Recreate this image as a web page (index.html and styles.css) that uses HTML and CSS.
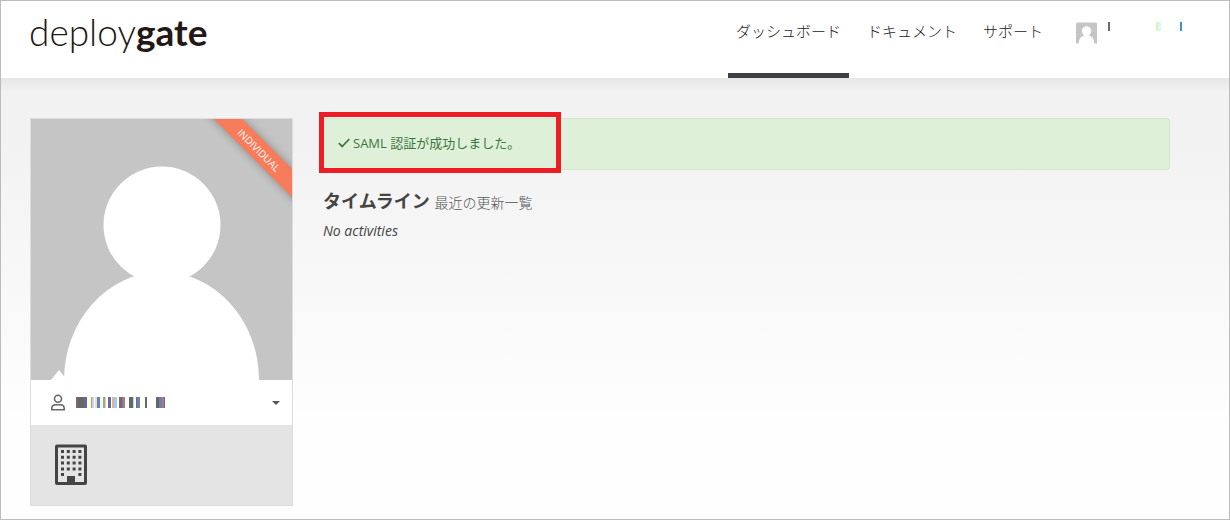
FILE: index.html
```html
<!DOCTYPE html>
<html lang="ja">
<head>
<meta charset="utf-8">
<meta name="viewport" content="width=device-width, initial-scale=1">
<title>DeployGate</title>
<link rel="stylesheet" href="styles.css">
</head>
<body>
<svg class="defs" aria-hidden="true">
  <symbol id="avatar" viewBox="0 0 261 261">
    <rect width="261" height="261" fill="#c5c5c5"/>
    <circle cx="131" cy="106" r="58.5" fill="#fff"/>
    <ellipse cx="130.500" cy="261" rx="97.500" ry="108" fill="#fff"/>
  </symbol>
</svg>
<div class="page">
  <header class="header">
    <a class="logo" href="#">deploy<b>gate</b></a>
    <nav class="nav">
      <a class="nav-link active" href="#">ダッシュボード</a>
      <a class="nav-link" href="#">ドキュメント</a>
      <a class="nav-link" href="#">サポート</a>
      <button class="account" type="button" aria-label="アカウント">
        <svg class="account-avatar"><use href="#avatar"/></svg>
        <svg class="account-name" viewBox="0 0 74 9" shape-rendering="crispEdges">
          <path fill="#6b6b6b" d="M0 0h2v9H0z"/>
          <path fill="#ffe3ae" d="M48 0h2v9h-2z"/>
          <path fill="#cff" d="M50 0h3v9h-3z"/>
          <path fill="#3a93d5" d="M72 0h2v9h-2z"/>
        </svg>
      </button>
    </nav>
  </header>
  <div class="content">
    <aside class="card">
      <div class="photo">
        <svg class="photo-image"><use href="#avatar"/></svg>
        <span class="ribbon">INDIVIDUAL</span>
      </div>
      <button class="user" type="button" aria-label="ユーザー">
        <svg class="user-icon" viewBox="0 0 14 17" fill="none" stroke="#666" stroke-width="1.6">
          <circle cx="7" cy="4.7" r="3.5"/>
          <path d="M.8 15.8v-1.3c0-2.4 1.6-3.8 3.7-3.8h5c2.100 0 3.700 1.400 3.700 3.800v1.300z"/>
        </svg>
        <svg class="user-name" viewBox="0 0 89 11" shape-rendering="crispEdges">
          <path fill="#666" d="M2 0h6v11H2zM53 0h4v11h-4zM70 0h1v11h-1zM80 0h3v11h-3z"/>
          <path fill="#806666" d="M0 0h2v11H0zM43 0h3v11h-3zM60 0h1v11h-1z"/>
          <path fill="#66669b" d="M8 0h3v11H8zM32 0h3v11h-3zM69 0h1v11h-1zM88 0h1v11h-1z"/>
          <path fill="#ffffe0" d="M11 0h4v11h-4zM30 0h2v11h-2zM66 0h3v11h-3z"/>
          <path fill="#d0966a" d="M15 0h1v11h-1zM27 0h2v11h-2z"/>
          <path fill="#f0b080" d="M36 0h2v11h-2z"/>
          <path fill="#a8dcff" d="M16 0h2v11h-2zM29 0h1v11h-1zM57 0h1v11h-1z"/>
          <path fill="#ffd9ae" d="M19 0h2v11h-2z"/>
          <path fill="#6680bb" d="M21 0h3v11h-3zM46 0h1v11h-1zM61 0h3v11h-3zM83 0h3v11h-3z"/>
          <path fill="#e0ffff" d="M24 0h3v11h-3z"/>
          <path fill="#99ccff" d="M38 0h3v11h-3z"/>
          <path fill="#b87a66" d="M47 0h2v11h-2zM86 0h2v11h-2z"/>
        </svg>
        <span class="caret"></span>
      </button>
      <div class="organizations">
        <a class="organization" href="#" aria-label="組織">
          <svg class="building" viewBox="0 0 32 41">
            <rect x="1.500" y="2" width="29" height="37.500" rx=".5" fill="none" stroke="#444" stroke-width="3"/>
            <path d="M12 32h8v8h-8z" fill="#444"/>
            <path d="M6 7.500h22M6 13.300h22M6 19.100h22M6 24.900h22" stroke="#444" stroke-width="3" stroke-dasharray="3 2.800"/>
            <path d="M6 30.500h3M23.400 30.500h3" stroke="#444" stroke-width="3"/>
          </svg>
        </a>
      </div>
    </aside>
    <main class="main">
      <div class="alert" role="status">
        <svg class="check" viewBox="0 0 12 10" fill="none" stroke="#3c763d" stroke-width="1.8"><path d="M.8 5.200l3.400 3.300L11.300 1"/></svg>
        <span>SAML 認証が成功しました。</span>
        <span class="highlight"></span>
      </div>
      <h1 class="title">タイムライン <small>最近の更新一覧</small></h1>
      <p class="empty">No activities</p>
    </main>
  </div>
</div>
</body>
</html>
```
FILE: styles.css
```css
* { box-sizing: border-box; }
body {
  margin: 0;
  color: #444;
  font: 13px/20px "Open Sans", "Noto Sans CJK JP", sans-serif;
}
a { color: inherit; text-decoration: none; }
button { border: 0; padding: 0; background: none; font: inherit; color: inherit; cursor: pointer; }
svg { display: block; flex: none; }
.defs { position: absolute; width: 0; height: 0; }
.page {
  min-height: 100vh;
  border: 1px solid #bcbcbc;
  background: linear-gradient(#f2f2f2 140px, #fefefe 420px);
}
.header {
  display: flex;
  justify-content: space-between;
  height: 77px;
  padding: 0 47px 0 28px;
  background: #fff;
}
.logo {
  padding-top: 8px;
  color: #231815;
  font: 300 37px/46px Lato, sans-serif;
}
.logo b { font-weight: 700; }
.nav { display: flex; gap: 10px; }
.nav-link {
  padding: 19px 8px 0;
  color: #222;
  font-size: 15px;
  font-weight: 300;
  line-height: 22px;
}
.nav-link.active { border-bottom: 5px solid #3b4043; }
.account {
  display: flex;
  align-items: flex-start;
  gap: 11px;
  padding: 21px 0 0 15px;
}
.account-avatar { width: 21px; height: 22px; border-radius: 2px 2px 0 0; }
.account-name { width: 74px; height: 9px; }
.content {
  display: flex;
  align-items: flex-start;
  gap: 29px;
  padding: 40px 59px 13px 29px;
  background: linear-gradient(#e6e6e6, rgba(242, 242, 242, 0) 14px);
}
.card {
  flex: 0 0 263px;
  border: 1px solid #ddd;
  background: #fff;
}
.photo { position: relative; overflow: hidden; }
.photo::after {
  content: "";
  position: absolute;
  left: 20px;
  bottom: 0;
  border: solid transparent;
  border-width: 0 8px 10px;
  border-bottom-color: #fff;
}
.photo-image { width: 100%; height: auto; aspect-ratio: 1; }
.ribbon {
  position: absolute;
  top: 21px;
  right: -32px;
  width: 130px;
  color: #fff;
  background: #f67c5c;
  box-shadow: 0 0 10px rgba(0, 0, 0, .3);
  font-size: 10px;
  line-height: 20px;
  text-align: center;
  transform: rotate(45deg);
}
.user {
  display: flex;
  align-items: center;
  width: 100%;
  height: 45px;
  padding: 0 12px 0 20px;
}
.user-icon { width: 14px; height: 17px; margin-right: 11px; }
.user-name { width: 89px; height: 11px; }
.caret {
  margin-left: auto;
  border: solid transparent;
  border-width: 4px 4px 0;
  border-top-color: #555;
}
.organizations { padding: 19px 24px 20px; background: #e4e4e4; }
.organization { display: inline-block; vertical-align: top; }
.building { width: 32px; height: 41px; }
.main { flex: 1; min-width: 0; }
.alert {
  position: relative;
  display: flex;
  align-items: center;
  gap: 3px;
  padding: 14px 15px 16px;
  border: 1px solid #d0e9c6;
  border-radius: 3px;
  color: #3c763d;
  background: #dff0d8;
}
.check { width: 12px; height: 10px; }
.highlight {
  position: absolute;
  top: -7px;
  left: -4px;
  width: 242px;
  height: 61px;
  border: 5px solid #ee1c25;
}
.title {
  margin: 19px 0 6px;
  padding-left: 1px;
  font-size: 18px;
  line-height: 24px;
}
.title small { color: #555; font-size: 14px; font-weight: 300; }
.empty { margin: 0; padding-left: 1px; font-size: 14px; font-style: italic; }
```
